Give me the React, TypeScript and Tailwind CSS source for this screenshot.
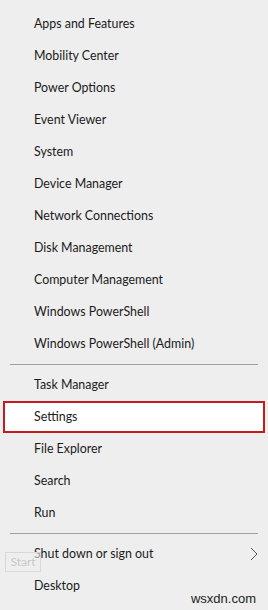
import React from "react";

const group1 = [
  "Apps and Features",
  "Mobility Center",
  "Power Options",
  "Event Viewer",
  "System",
  "Device Manager",
  "Network Connections",
  "Disk Management",
  "Computer Management",
  "Windows PowerShell",
  "Windows PowerShell (Admin)",
];
const group2 = ["Task Manager", "Settings", "File Explorer", "Search", "Run"];

function Row({ label, selected }: { label: string; selected?: boolean }) {
  return (
    <div
      className={
        selected
          ? "h-[32px] mx-[3px] flex items-center pl-[29px] bg-white border-2 border-[#c41a20]"
          : "h-[32px] flex items-center pl-[34px]"
      }
    >
      <span>{label}</span>
    </div>
  );
}

export default function App() {
  return (
    <div
      className="relative w-[268px] h-[610px] bg-[#eeeeee] text-[#1b1b1b] text-[12.4px] overflow-hidden"
      style={{ fontFamily: 'Lato, "Noto Sans", sans-serif' }}
    >
      <div className="pt-[8px] flex flex-col">
        {group1.map((l) => (
          <Row key={l} label={l} />
        ))}
        <div className="h-[9px] flex items-center px-[10px]">
          <div className="h-px w-full bg-[#a0a0a0]" />
        </div>
        {group2.map((l) => (
          <Row key={l} label={l} selected={l === "Settings"} />
        ))}
        <div className="h-[9px] flex items-center px-[10px]">
          <div className="h-px w-full bg-[#a0a0a0]" />
        </div>
        <div className="h-[32px] flex items-center pl-[34px] pr-[10px] justify-between">
          <span>Shut down or sign out</span>
          <svg width="8" height="14" viewBox="0 0 8 14" fill="none">
            <path d="M1 1l6 6-6 6" stroke="#555" strokeWidth="1" />
          </svg>
        </div>
        <div className="h-[32px] flex items-center pl-[34px]">
          <span>Desktop</span>
        </div>
      </div>
      <div className="absolute left-[5px] top-[552px] w-[36px] h-[20px] border border-[#d8d8d8] bg-[#eeeeee]/60 flex items-center justify-center text-[12px] text-[#c8c8c8]">
        Start
      </div>
      <div className="absolute right-[12px] bottom-[2px] text-[13px] text-[#222]" style={{ fontFamily: '"Liberation Sans", Arial, sans-serif' }}>
        wsxdn.com
      </div>
    </div>
  );
}
